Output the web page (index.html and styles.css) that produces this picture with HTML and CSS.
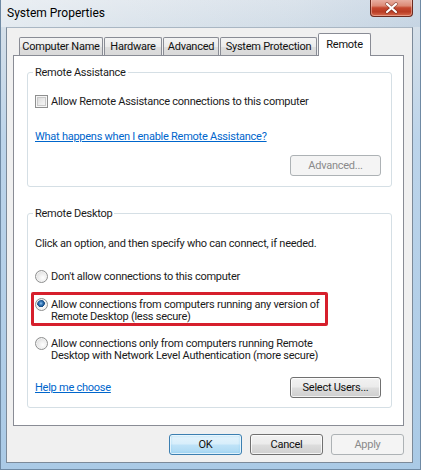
FILE: index.html
```html
<!DOCTYPE html>
<html lang="en">
<head>
<meta charset="utf-8">
<title>System Properties</title>
<link rel="stylesheet" href="styles.css">
</head>
<body>
<div class="window">
  <div class="titlebar">
    <span class="title">System Properties</span>
    <button class="close" aria-label="Close">
      <svg width="41" height="16" viewBox="0 0 41 16">
        <path d="M16 4 L25 12 M25 4 L16 12" stroke="#5a1e14" stroke-width="3.6" stroke-linecap="round" opacity="0.55"/>
        <path d="M16 4 L25 12 M25 4 L16 12" stroke="#ffffff" stroke-width="2.2" stroke-linecap="round"/>
      </svg>
    </button>
  </div>
  <div class="client">
    <div class="tabs">
      <div class="tab tab-name">Computer Name</div>
      <div class="tab tab-hw">Hardware</div>
      <div class="tab tab-adv">Advanced</div>
      <div class="tab tab-sp">System Protection</div>
      <div class="tab tab-remote active">Remote</div>
    </div>
    <div class="panel">
      <fieldset class="group group-ra">
        <legend>Remote Assistance</legend>
        <div class="check-row">
          <span class="checkbox"></span>
          <span>Allow Remote Assistance connections to this computer</span>
        </div>
        <a class="link ra-link" href="#">What happens when I enable Remote Assistance?</a>
        <div class="btn-row ra-btns">
          <button class="btn btn-wide disabled">Advanced...</button>
        </div>
      </fieldset>
      <fieldset class="group group-rd">
        <legend>Remote Desktop</legend>
        <p class="intro">Click an option, and then specify who can connect, if needed.</p>
        <div class="radio-row r1">
          <span class="radio"></span>
          <span>Don't allow connections to this computer</span>
        </div>
        <div class="radio-row multi r2">
          <span class="radio checked"></span>
          <span>Allow connections from computers running any version of<br>Remote Desktop (less secure)</span>
          <span class="highlight"></span>
        </div>
        <div class="radio-row multi r3">
          <span class="radio"></span>
          <span>Allow connections only from computers running Remote<br>Desktop with Network Level Authentication (more secure)</span>
        </div>
        <div class="foot-row">
          <a class="link" href="#">Help me choose</a>
          <button class="btn btn-wide">Select Users...</button>
        </div>
      </fieldset>
    </div>
    <div class="dialog-buttons">
      <button class="btn default">OK</button>
      <button class="btn">Cancel</button>
      <button class="btn disabled">Apply</button>
    </div>
  </div>
</div>
</body>
</html>
```

FILE: styles.css
```css
* {
  box-sizing: border-box;
  margin: 0;
  padding: 0;
}

html, body {
  width: 421px;
  height: 470px;
  overflow: hidden;
}

body {
  font-family: Roboto, "Noto Sans", sans-serif;
  font-size: 11px;
  line-height: 13px;
  letter-spacing: -0.25px;
  color: #1b1b1b;
  background: #a9c8e4;
}

.window {
  width: 421px;
  height: 470px;
  display: flex;
  flex-direction: column;
  border: 1px solid #6f8aa4;
  border-top: none;
  background: linear-gradient(180deg, #dfe6ed 0, #d6e0e9 26px, #bcd4ea 140px, #aacae6 100%);
}

/* ---------- title bar ---------- */
.titlebar {
  height: 27px;
  flex: none;
  display: flex;
  align-items: flex-start;
  background: linear-gradient(90deg, rgba(255,255,255,0.35) 0, rgba(255,255,255,0.15) 30%, rgba(180,200,220,0.1) 70%, rgba(150,180,210,0.25) 100%);
}

.title {
  padding-left: 6px;
  font-size: 12px;
  line-height: 27px;
  letter-spacing: 0;
  color: #000;
}

.close {
  margin-left: auto;
  margin-right: 7px;
  margin-top: -1px;
  width: 43px;
  height: 18px;
  border: 1px solid #6b2a1f;
  border-top: none;
  border-radius: 0 0 4px 4px;
  background: linear-gradient(180deg, #eab4a8 0, #dc8a76 40%, #c5482f 52%, #b93c24 75%, #d86c4f 100%);
  box-shadow: inset 0 0 0 1px rgba(255, 215, 205, 0.45);
  display: flex;
  align-items: center;
  justify-content: center;
  padding-top: 1px;
}

.close svg {
  display: block;
}

/* ---------- client area ---------- */
.client {
  flex: 1;
  margin: 0 7px 6px 5px;
  border: 1px solid #7c8a99;
  border-top-color: #a9b6c3;
  background: #f0f0f0;
  padding-top: 5px;
  display: flex;
  flex-direction: column;
}

.tabs {
  height: 22px;
  margin-left: 6px;
  padding-left: 6px;
  display: flex;
  align-items: flex-end;
}

.tab {
  height: 18px;
  margin-right: 1px;
  border: 1px solid #898c95;
  border-bottom: none;
  border-radius: 2px 2px 0 0;
  background: linear-gradient(180deg, #f4f4f4 0, #ebebeb 50%, #dedede 51%, #d9d9d9 100%);
  text-align: center;
  padding-top: 2px;
  white-space: nowrap;
  color: #111;
}

.tab-name { width: 84px; }
.tab-hw { width: 58px; }
.tab-adv { width: 56px; }
.tab-sp { width: 97px; }

.tab.active {
  width: 53px;
  height: 23px;
  margin-bottom: -1px;
  margin-right: 0;
  padding-top: 4px;
  background: #ffffff;
  position: relative;
  z-index: 1;
}

.panel {
  margin-left: 6px;
  width: 391px;
  height: 371px;
  flex: none;
  border: 1px solid #898c95;
  background: #ffffff;
  padding: 0 11px 0 13px;
}

/* ---------- group boxes ---------- */
.group {
  border: 1px solid #d5dfe5;
  border-radius: 3px;
  padding: 0 10px 10px 7px;
  min-inline-size: 0;
}

.group legend {
  margin-left: -2px;
  padding: 0 2px;
  line-height: 13px;
  color: #1b1b1b;
}

.group-ra {
  margin-top: 10px;
}

.group-rd {
  margin-top: 20px;
  padding-bottom: 9px;
}

.check-row {
  margin-top: 16px;
  display: flex;
  align-items: center;
  gap: 3px;
  height: 13px;
}

.checkbox {
  width: 13px;
  height: 13px;
  flex: none;
  border: 1px solid #8e8f8f;
  background: linear-gradient(135deg, #d4d4d4 0, #eeeeee 60%, #f8f8f8 100%);
  box-shadow: inset 0 0 0 1px #f6f6f6, inset 0 0 0 2px #c9c9c9;
}

.link {
  color: #0066cc;
  text-decoration: underline;
}

.ra-link {
  display: block;
  margin-top: 22px;
  width: max-content;
}

.btn-row {
  display: flex;
  justify-content: flex-end;
}

.ra-btns {
  margin-top: 12px;
}

.intro {
  margin-top: 17px;
}

.radio-row {
  display: flex;
  align-items: flex-start;
  gap: 3px;
}

.radio-row.multi {
  line-height: 12px;
}

.r1 { margin-top: 20px; }
.r2 { margin-top: 16px; position: relative; }
.r3 { margin-top: 15px; }

.radio {
  width: 13px;
  height: 13px;
  flex: none;
  border-radius: 50%;
  border: 1px solid #8e8f8f;
  background: radial-gradient(circle at 62% 62%, #ffffff 0, #ececec 45%, #cfcfcf 100%);
  box-shadow: inset 0 0 0 1px #f3f3f3;
}

.radio-row.multi .radio {
  margin-top: -1px;
}

.radio.checked {
  background:
    radial-gradient(circle at 45% 40%, #9cc9ef 0, #3f82c2 1.5px, #1d5590 3px, #1a4d84 3.6px, transparent 4px),
    radial-gradient(circle at 62% 62%, #ffffff 0, #ececec 45%, #cfcfcf 100%);
}

.highlight {
  position: absolute;
  top: -7px;
  left: -4px;
  width: 297px;
  height: 34px;
  border: 3px solid #d61f2c;
  border-radius: 2px;
  pointer-events: none;
}

.foot-row {
  margin-top: 15px;
  display: flex;
  align-items: center;
  justify-content: space-between;
}

/* ---------- buttons ---------- */
.btn {
  width: 73px;
  height: 21px;
  font-family: inherit;
  font-size: 11px;
  letter-spacing: -0.25px;
  color: #111;
  border: 1px solid #707070;
  border-radius: 3px;
  background: linear-gradient(180deg, #f2f2f2 0, #ebebeb 48%, #dddddd 52%, #cfcfcf 100%);
  box-shadow: inset 0 0 0 1px rgba(255, 255, 255, 0.75);
}

.btn-wide {
  width: 91px;
}

.btn.disabled {
  color: #8a8a8a;
  border-color: #adb2b5;
  background: #f4f4f4;
  box-shadow: none;
}

.btn.default {
  border-color: #3c7fb1;
  background: linear-gradient(180deg, #e6f4fc 0, #d7eefb 48%, #bfe3f8 52%, #a9d7f2 100%);
  box-shadow: inset 0 0 0 1px rgba(255, 255, 255, 0.7), inset 0 0 2px 1px rgba(120, 200, 240, 0.6);
}

.dialog-buttons {
  margin-top: 8px;
  margin-left: 6px;
  width: 391px;
  display: flex;
  justify-content: flex-end;
  gap: 8px;
}
```
